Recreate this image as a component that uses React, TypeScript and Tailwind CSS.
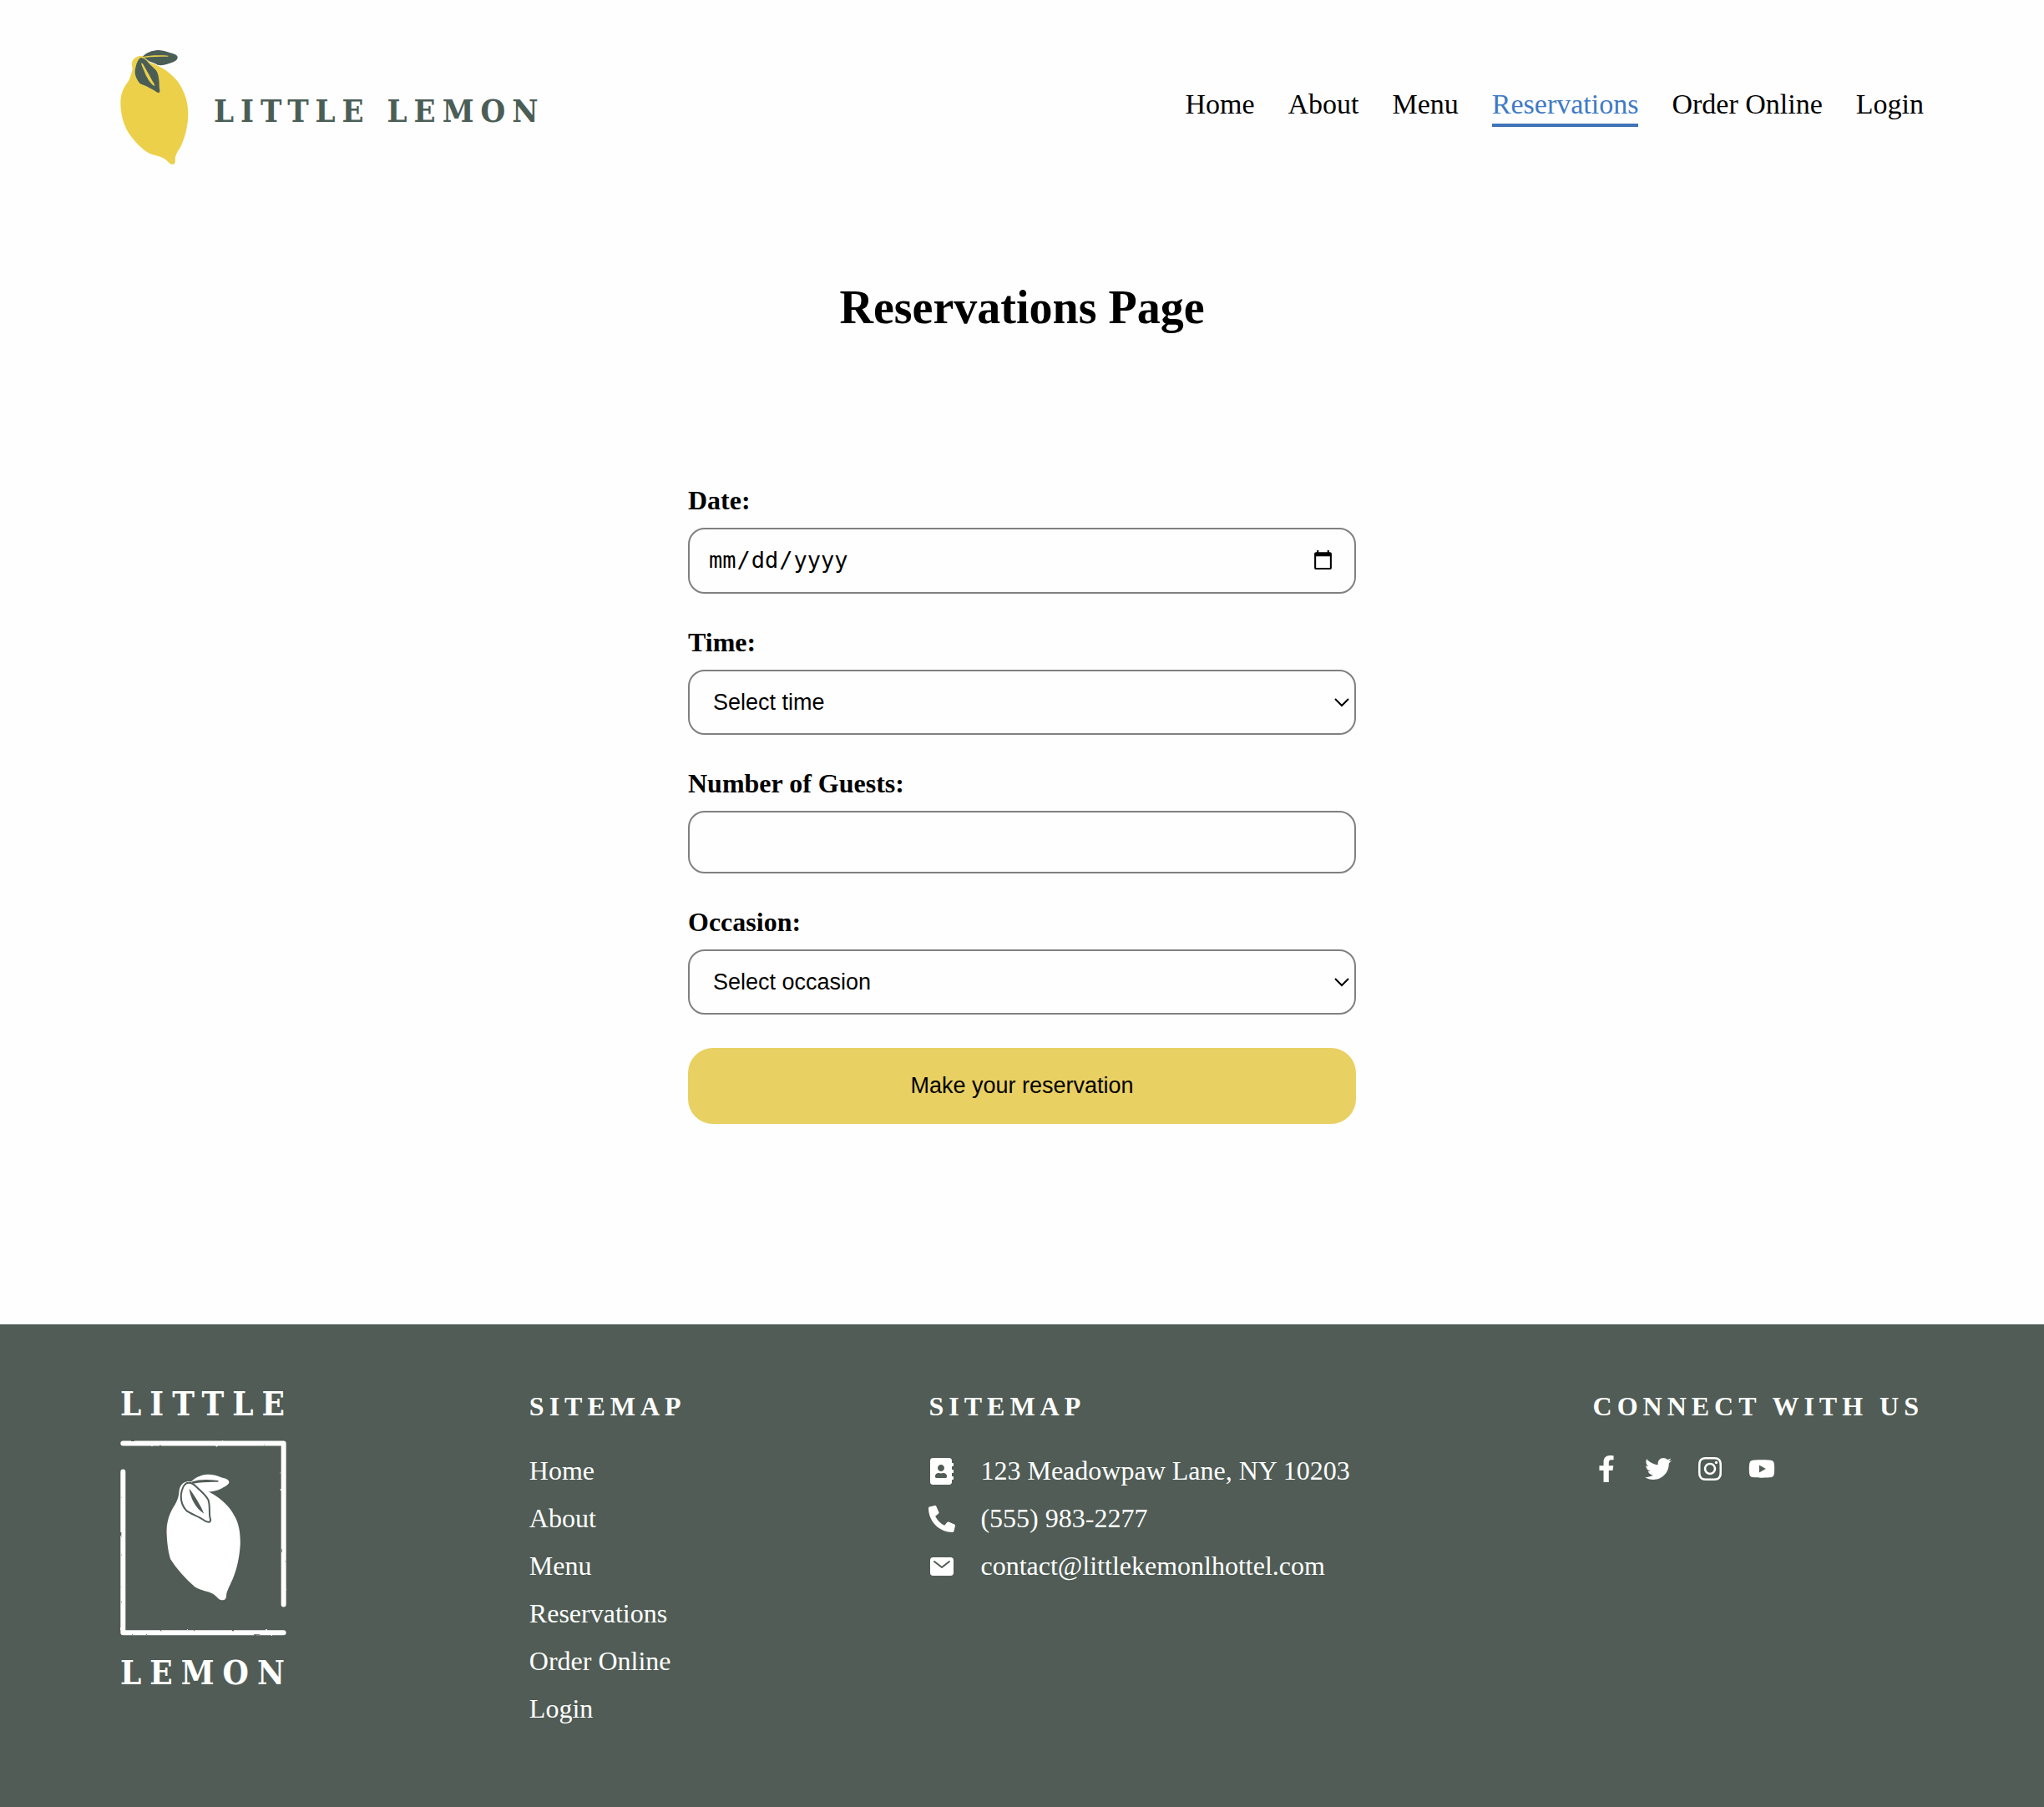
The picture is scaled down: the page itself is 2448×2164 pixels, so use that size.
import type { ReactNode } from "react";
import { FaAddressBook, FaFacebookF, FaInstagram, FaPhoneAlt, FaTwitter, FaYoutube } from "react-icons/fa";
import { IoMail } from "react-icons/io5";

const links = ["Home", "About", "Menu", "Reservations", "Order Online", "Login"];

const contacts = [
  { icon: <FaAddressBook />, text: "123 Meadowpaw Lane, NY 10203" },
  { icon: <FaPhoneAlt />, text: "(555) 983-2277" },
  { icon: <IoMail />, text: "contact@littlekemonlhottel.com" },
];

const socials = [
  { name: "Facebook", icon: <FaFacebookF /> },
  { name: "Twitter", icon: <FaTwitter /> },
  { name: "Instagram", icon: <FaInstagram /> },
  { name: "YouTube", icon: <FaYoutube /> },
];

const fieldClass =
  "w-full appearance-none rounded-[20px] border-2 border-[#808080] bg-[#fefefe] text-[27px] text-black";

function Lemon() {
  return (
    <svg viewBox="40 59 237 411" preserveAspectRatio="none" className="h-[137px] w-[82px]" aria-hidden="true">
      <path
        fill="#ecd04a"
        d="M108 80C92 84 83 92 81 104C79 114 83 120 82 130C76 152 72 168 62 180C48 200 41 222 41 248C41 282 49 322 68 355C88 385 112 412 136 427C160 440 180 438 198 453C205 460 212 469 220 470C230 469 231 462 230 452C230 440 236 425 244 415C262 385 276 330 275 283C274 245 264 210 240 173C218 142 180 115 142 103L122 84Q114 79 108 80Z"
      />
      <path
        fill="#4b5e56"
        d="M118 82C130 68 150 60 172 59C190 60 202 64 213 69C224 72 233 74 237 80Q241 86 235 94C227 102 214 104 203 109C192 113 180 115 169 112C160 105 148 104 139 99Q130 92 124 87Z"
      />
      <path fill="#ecd04a" d="M118 84C140 77 176 77 206 79Q209 81 204 82C176 82 150 82 122 86Z" />
      <path
        fill="#4b5e56"
        d="M111 87C103 90 97 105 94 118C90 131 90 142 94 154C99 166 105 178 114 182C128 187 140 194 151 200C160 205 166 210 173 213Q178 211 177 204C174 192 176 175 173 158C171 144 168 135 160 127C149 117 138 106 130 96Q120 85 111 87Z"
      />
      <path fill="#ecd04a" d="M113 105Q119 107 123 117C130 132 139 144 144 156C149 168 157 177 160 187Q155 188 150 182C140 171 132 157 127 145C123 132 116 120 113 109Z" />
    </svg>
  );
}

function FramedLemon() {
  return (
    <svg viewBox="43 253 598 702" className="h-[234px] w-[199px]" aria-hidden="true">
      <filter id="rough" x="-5%" y="-5%" width="110%" height="110%">
        <feTurbulence type="fractalNoise" baseFrequency="0.05" numOctaves="1" seed="4" />
        <feDisplacementMap in="SourceGraphic" scale="7" xChannelSelector="R" yChannelSelector="G" />
      </filter>
      <g filter="url(#rough)" fill="none" stroke="#fff" strokeWidth="18" strokeLinecap="round" strokeLinejoin="round">
        <path d="M53 263H631V843" />
        <path d="M53 365V944H631" />
      </g>
      <path
        fill="#fff"
        d="M281 401C264 405 256 420 255 436C254 452 250 466 240 484C222 510 209 545 210 583C211 620 216 655 224 680C244 712 280 752 312 780C335 795 362 794 382 808C392 816 398 826 408 827C422 827 425 820 425 808C426 795 440 770 449 748C463 715 473 668 475 625C476 585 470 550 453 522C434 487 402 458 362 437L300 402Q290 398 281 401Z"
      />
      <path
        fill="#fff"
        d="M297 402C312 387 332 376 358 375C382 374 397 383 414 388C426 390 434 396 435 403C433 413 420 418 408 425C394 432 380 436 362 437L330 426Z"
      />
      <path fill="#505c55" d="M300 401C328 391 366 392 395 397Q398 400 394 402C364 402 334 403 304 408Z" />
      <path
        fill="#fff"
        stroke="#505c55"
        strokeWidth="6"
        strokeLinejoin="round"
        d="M289 405C272 405 264 430 262 447C260 470 265 488 282 506C300 518 325 526 342 538C350 544 355 548 364 546Q371 542 366 531C362 508 367 487 360 467C352 450 332 434 320 422C308 411 302 404 289 405Z"
      />
      <path fill="#505c55" d="M291 426C300 436 310 452 320 468C329 484 339 500 344 516C328 504 317 492 308 476C299 460 294 444 291 426Z" />
    </svg>
  );
}

function Field({ id, label, children }: { id: string; label: string; children: ReactNode }) {
  return (
    <div className="flex flex-col gap-[14px]">
      <label htmlFor={id} className="text-[32px] leading-[37px] font-bold">
        {label}
      </label>
      {children}
    </div>
  );
}

function Dropdown({ id, placeholder, options }: { id: string; placeholder: string; options: string[] }) {
  return (
    <div className="relative">
      <select id={id} className={`${fieldClass} block px-7 py-[22px] font-['Liberation_Sans',sans-serif] leading-[30px]`}>
        <option>{placeholder}</option>
        {options.map((o) => (
          <option key={o}>{o}</option>
        ))}
      </select>
      <svg
        viewBox="0 0 18 11"
        className="pointer-events-none absolute top-[34px] right-2 h-[11px] w-[18px]"
        fill="none"
        stroke="#000"
        strokeWidth="2"
        aria-hidden="true"
      >
        <path d="M1 1l8 8 8-8" />
      </svg>
    </div>
  );
}

const footerHeading = "text-[32px] leading-[37px] font-bold tracking-[6px]";
const logoText = "font-['DejaVu_Serif_Condensed','DejaVu_Serif',serif] font-bold whitespace-nowrap";

export default function App() {
  return (
    <div className="flex min-h-screen flex-col bg-[#fefefe] font-['Liberation_Serif',serif] text-black">
      <header className="flex items-center justify-between px-36 py-[60px]">
        <a href="#home" className="flex items-center gap-[30px]">
          <Lemon />
          <span className={`${logoText} mt-2 text-[38px] leading-none tracking-[8px] text-[#4b5e56]`}>
            LITTLE LEMON
          </span>
        </a>
        <nav className="flex gap-10 text-[34px] leading-[39px]">
          {links.map((l) => (
            <a
              key={l}
              href={`#${l}`}
              className={
                l === "Reservations"
                  ? "border-b-4 border-[#3f74b8] pb-1 text-[#3f7ac6]"
                  : "border-b-4 border-transparent pb-1"
              }
            >
              {l}
            </a>
          ))}
        </nav>
      </header>

      <main className="flex grow flex-col items-center px-36 pt-[79px] pb-60">
        <h1 className="text-[56px] leading-[64px] font-bold">Reservations Page</h1>
        <form className="mt-[181px] flex w-full max-w-[800px] flex-col gap-10">
          <Field id="date" label="Date:">
            <input
              id="date"
              type="date"
              className={`${fieldClass} h-[79px] px-[22px] font-['DejaVu_Sans_Mono',monospace]`}
            />
          </Field>
          <Field id="time" label="Time:">
            <Dropdown id="time" placeholder="Select time" options={["17:00", "18:00", "19:00", "20:00"]} />
          </Field>
          <Field id="guests" label="Number of Guests:">
            <input
              id="guests"
              type="number"
              className={`${fieldClass} h-[75px] px-[22px] font-['Liberation_Sans',sans-serif]`}
            />
          </Field>
          <Field id="occasion" label="Occasion:">
            <Dropdown id="occasion" placeholder="Select occasion" options={["Birthday", "Anniversary"]} />
          </Field>
          <button
            type="submit"
            className="rounded-[30px] bg-[#e9d062] py-[30px] font-['Liberation_Sans',sans-serif] text-[27px] leading-[31px]"
          >
            Make your reservation
          </button>
        </form>
      </main>

      <footer className="flex items-start justify-between bg-[#505c55] px-36 pt-20 pb-[99px] text-white">
        <a href="#home" className="flex w-[199px] flex-col gap-[29px]">
          <span className={`${logoText} text-[40px] leading-[30px] tracking-[10px]`}>LITTLE</span>
          <FramedLemon />
          <span className={`${logoText} text-[40px] leading-[30px] tracking-[10px]`}>LEMON</span>
        </a>

        <div className="flex flex-col gap-10">
          <h2 className={footerHeading}>SITEMAP</h2>
          <ul className="flex flex-col gap-5 text-[32px] leading-[37px]">
            {links.map((l) => (
              <li key={l}>
                <a href={`#${l}`}>{l}</a>
              </li>
            ))}
          </ul>
        </div>

        <div className="flex flex-col gap-10">
          <h2 className={footerHeading}>SITEMAP</h2>
          <ul className="flex flex-col gap-5 text-[32px] leading-[37px]">
            {contacts.map((c) => (
              <li key={c.text} className="flex items-center gap-[30px]">
                {c.icon}
                <span>{c.text}</span>
              </li>
            ))}
          </ul>
        </div>

        <div className="flex flex-col gap-10">
          <h2 className={footerHeading}>CONNECT WITH US</h2>
          <div className="flex gap-[30px] text-[32px]">
            {socials.map((s) => (
              <a key={s.name} href={`#${s.name}`} aria-label={s.name}>
                {s.icon}
              </a>
            ))}
          </div>
        </div>
      </footer>
    </div>
  );
}
